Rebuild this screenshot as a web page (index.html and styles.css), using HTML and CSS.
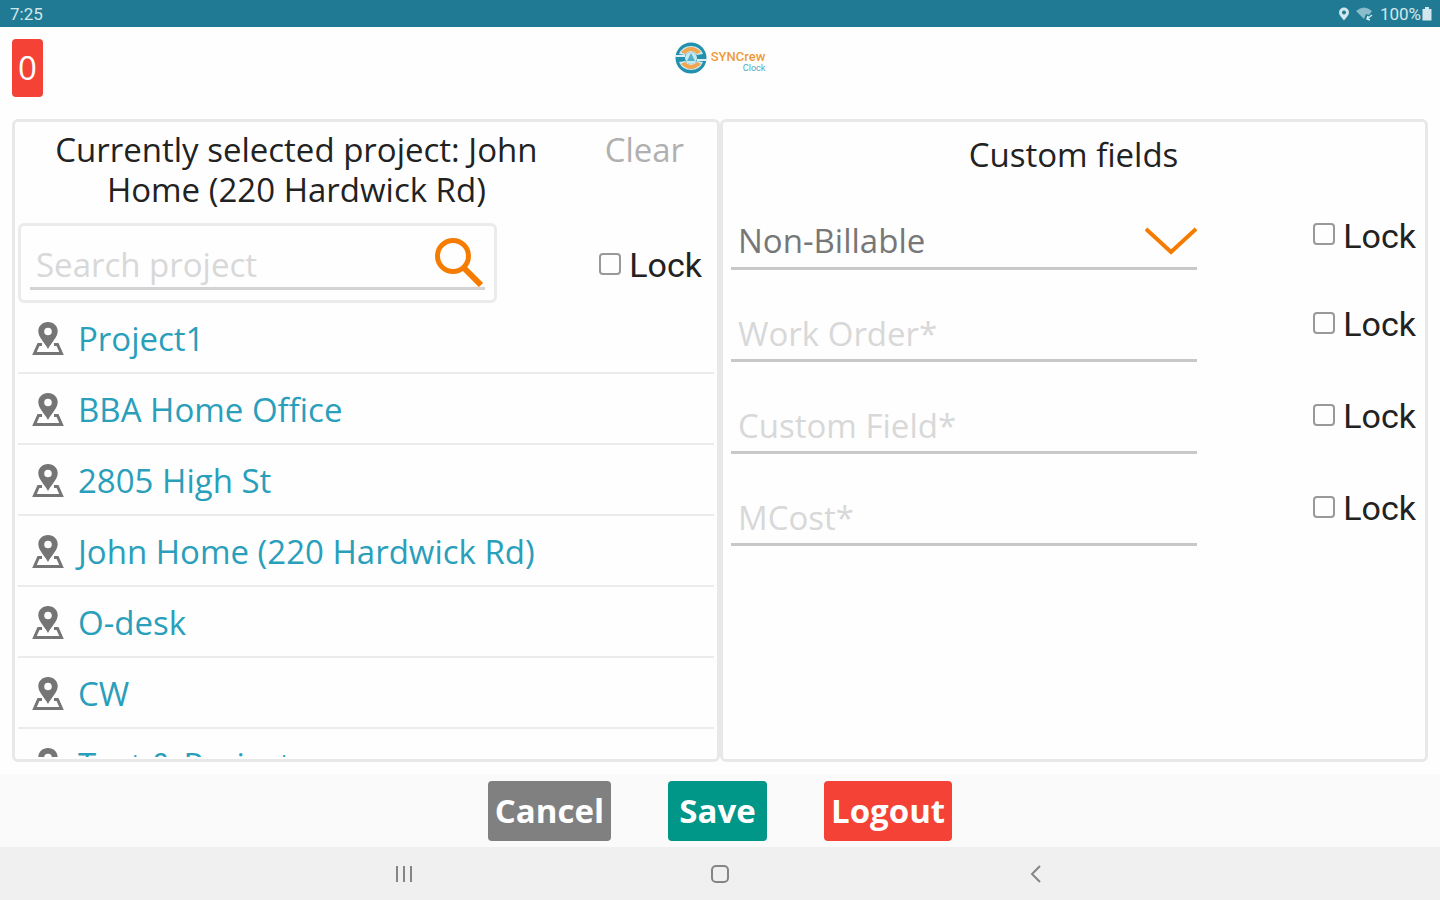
FILE: index.html
```html
<!DOCTYPE html>
<html lang="en">
<head>
  <meta charset="UTF-8">
  <meta name="viewport" content="width=device-width, initial-scale=1">
  <title>SYNCrew Clock</title>
  <link rel="stylesheet" href="styles.css">
</head>

<body>

  <!-- shared icons -->
  <svg class="sprite" aria-hidden="true">
    <symbol id="icon-place" viewBox="0 0 32 36">
      <path fill-rule="evenodd" d="M16 1C10.400 1 6.300 5 6.300 10.200C6.300 16 12 20.500 16 28C20 20.500 25.700 16 25.700 10.200C25.700 5 21.600 1 16 1ZM16 6.700A3.800 3.800 0 1 1 16 14.300A3.800 3.800 0 1 1 16 6.700Z"/>
      <path d="M10 23.500H6.500L2.500 32.500H29.500L25.500 23.500H22" fill="none" stroke="currentColor" stroke-width="3"/>
    </symbol>
  </svg>

  <div class="status-bar">
    <span>7:25</span>
    <div class="status-icons">
      <svg width="12" height="14" viewBox="0 0 12 14"><path fill="currentColor" fill-rule="evenodd" d="M6 0.500A5 5 0 0 0 1 5.500C1 8.500 4 10.500 6 13.500C8 10.500 11 8.500 11 5.500A5 5 0 0 0 6 0.500ZM6 3.500A2 2 0 1 1 6 7.500A2 2 0 1 1 6 3.500Z"/></svg>
      <svg width="18" height="14" viewBox="0 0 18 14"><path fill="currentColor" opacity=".6" d="M0 4Q8 -3 16 4L13 8L10 7L8 12Z"/><path d="M11 12L16 8M12 9L11 12L14 13" fill="none" stroke="currentColor" stroke-width="1.500"/></svg>
      <span>100%</span>
      <svg class="battery" width="10" height="14" viewBox="0 0 10 14"><path fill="currentColor" d="M3 0H7V2H9.500V13.500H.5V2H3Z"/></svg>
    </div>
  </div>

  <header class="app-header">
    <span class="counter">0</span>
    <div class="logo">
      <svg width="32" height="32" viewBox="0 0 32 32">
        <circle cx="16" cy="16" r="15.500" fill="#2390ad"/>
        <path d="M4 12A13 13 0 0 1 28 12L22 13Q16 7 10 13Z" fill="#cfe8ee"/>
        <path d="M4 20A13 13 0 0 0 28 20L22 19Q16 25 10 19Z" fill="#cfe8ee"/>
        <path d="M6 10Q16 0 26 10L22 12Q16 6 10 12Z" fill="#f2a650"/>
        <path d="M6 22Q16 32 26 22L22 20Q16 26 10 20Z" fill="#f2a650"/>
        <path d="M0 14H10M22 18H32" stroke="#d9eff4" stroke-width="2"/>
        <circle cx="16" cy="16" r="6" fill="#c7e9f1"/>
        <path d="M16 11L20 19H12Z" fill="#53b0c8"/>
      </svg>
      <div class="logo-text">
        <span class="logo-name">SYNCrew</span>
        <span class="logo-sub">Clock</span>
      </div>
    </div>
  </header>

  <main class="panels">
    <section class="panel projects">
      <div class="selected">
        <h1>Currently selected project: John Home (220 Hardwick Rd)</h1>
        <button type="button" class="clear">Clear</button>
      </div>

      <div class="search-row">
        <div class="search-box">
          <div class="search-field">
            <input type="text" placeholder="Search project" aria-label="Search project">
            <svg width="52" height="52" viewBox="0 0 52 52"><circle cx="20" cy="21" r="15.500" fill="none" stroke="#f57c00" stroke-width="5"/><path d="M31 33L48 50" stroke="#f57c00" stroke-width="6"/></svg>
          </div>
        </div>
        <label class="lock"><input type="checkbox">Lock</label>
      </div>

      <ul class="project-list">
        <li><a href="#"><svg><use href="#icon-place"/></svg>Project1</a></li>
        <li><a href="#"><svg><use href="#icon-place"/></svg>BBA Home Office</a></li>
        <li><a href="#"><svg><use href="#icon-place"/></svg>2805 High St</a></li>
        <li><a href="#"><svg><use href="#icon-place"/></svg>John Home (220 Hardwick Rd)</a></li>
        <li><a href="#"><svg><use href="#icon-place"/></svg>O-desk</a></li>
        <li><a href="#"><svg><use href="#icon-place"/></svg>CW</a></li>
        <li><a href="#"><svg><use href="#icon-place"/></svg>Test &amp; Project</a></li>
      </ul>
    </section>

    <section class="panel custom">
      <h2>Custom fields</h2>

      <div class="field-row field-row-select">
        <div class="field">
          <select aria-label="Billing type">
            <option>Non-Billable</option>
            <option>Billable</option>
          </select>
          <svg class="chevron" width="52" height="28" viewBox="0 0 52 28"><path d="M1 2L26 25L51 2" fill="none" stroke="#f57c00" stroke-width="4"/></svg>
        </div>
        <label class="lock"><input type="checkbox">Lock</label>
      </div>
      <div class="field-row">
        <div class="field"><input type="text" placeholder="Work Order*" aria-label="Work Order"></div>
        <label class="lock"><input type="checkbox">Lock</label>
      </div>
      <div class="field-row">
        <div class="field"><input type="text" placeholder="Custom Field*" aria-label="Custom Field"></div>
        <label class="lock"><input type="checkbox">Lock</label>
      </div>
      <div class="field-row">
        <div class="field"><input type="text" placeholder="MCost*" aria-label="MCost"></div>
        <label class="lock"><input type="checkbox">Lock</label>
      </div>
    </section>
  </main>

  <footer class="actions">
    <button type="button" class="btn cancel">Cancel</button>
    <button type="button" class="btn save">Save</button>
    <button type="button" class="btn logout">Logout</button>
  </footer>

  <nav class="nav-bar">
    <button type="button" aria-label="Recent apps"><svg width="20" height="20" viewBox="0 0 20 20"><path d="M3 2V18M10 2V18M17 2V18"/></svg></button>
    <button type="button" aria-label="Home"><svg width="20" height="20" viewBox="0 0 20 20"><rect x="2" y="2" width="16" height="16" rx="4"/></svg></button>
    <button type="button" aria-label="Back"><svg width="20" height="20" viewBox="0 0 20 20"><path d="M14 2L6 10L14 18"/></svg></button>
  </nav>

</body>
</html>
```

FILE: styles.css
```css
* {
  box-sizing: border-box;
}

body {
  font-family: "Open Sans", "Noto Sans", sans-serif;
  font-size: 33px;
  line-height: 40px;
  color: #222;
  background: #fefefe;
  margin: 0;
  display: flex;
  flex-direction: column;
  height: 100vh;
}

h1, h2 {
  margin: 0;
  font-size: inherit;
  font-weight: 400;
  text-align: center;
}

button, input, select {
  font: inherit;
  border: none;
  background: none;
  margin: 0;
  padding: 0;
}

.sprite {
  display: none;
}

.status-bar {
  display: flex;
  justify-content: space-between;
  align-items: center;
  height: 27px;
  padding: 0 8px 0 10px;
  background: #217a93;
  color: #d2e7ed;
  font-family: Roboto, sans-serif;
  font-size: 17px;
  line-height: 20px;
}

.status-icons {
  display: flex;
  align-items: center;
  gap: 6px;
}

.battery {
  margin-left: -5px;
}

.app-header {
  display: grid;
  grid-template-columns: 1fr auto 1fr;
  align-items: start;
  height: 92px;
  padding: 12px;
}

.counter {
  justify-self: start;
  width: 31px;
  border-radius: 4px;
  background: #f44336;
  color: #fff;
  line-height: 58px;
  text-align: center;
}

.logo {
  display: flex;
  gap: 4px;
  padding-top: 3px;
}

.logo-text {
  display: flex;
  flex-direction: column;
  align-items: flex-end;
  padding-top: 8px;
  font-family: Roboto, sans-serif;
}

.logo-name {
  font-size: 13px;
  font-weight: 500;
  line-height: 14px;
  color: #f09a38;
}

.logo-sub {
  font-size: 9px;
  line-height: 8px;
  color: #4bacc5;
}

.panels {
  flex: 1;
  min-height: 0;
  display: grid;
  grid-template-columns: 1fr 1fr;
  padding: 0 12px 12px;
}

.panel {
  min-height: 0;
  border: 3px solid #e8e8e8;
  border-radius: 6px;
}

.projects {
  display: flex;
  flex-direction: column;
  padding: 0 3px 2px;
}

.selected {
  display: grid;
  grid-template-columns: 4fr 1fr;
  align-items: start;
  padding-top: 8px;
}

.selected h1 {
  padding: 0 20px;
}

.clear {
  color: #b0b0b0;
}

.search-row {
  display: flex;
  justify-content: space-between;
  align-items: center;
  padding: 13px 12px 0 0;
}

.search-box {
  width: 70%;
  height: 80px;
  padding: 10px 9px;
  border: 3px solid #ebebeb;
  border-radius: 6px;
}

.search-field {
  display: flex;
  align-items: flex-end;
  height: 54px;
  border-bottom: 3px solid #d3d3d3;
}

.search-field input {
  flex: 1;
  min-width: 0;
  height: 46px;
  padding-left: 6px;
}

.search-field svg {
  flex: none;
}

input::placeholder {
  color: #d8d8d8;
  opacity: 1;
}

.lock {
  display: flex;
  align-items: center;
  gap: 8px;
  padding-top: 4px;
  font-family: Roboto, sans-serif;
  font-size: 34px;
}

.lock input {
  appearance: none;
  width: 22px;
  height: 22px;
  margin-bottom: 3px;
  border: 2px solid #999;
  border-radius: 4px;
}

.project-list {
  flex: 1;
  min-height: 0;
  overflow: hidden;
  list-style: none;
  margin: 0;
  padding: 0;
}

.project-list li {
  height: 71px;
  border-bottom: 2px solid #ebebeb;
}

.project-list a {
  display: flex;
  align-items: center;
  gap: 14px;
  height: 100%;
  padding: 2px 0 0 14px;
  color: #2a9fbb;
  text-decoration: none;
}

.project-list svg {
  width: 32px;
  height: 36px;
  color: #757575;
  fill: currentColor;
}

.custom {
  padding: 0 9px 0 8px;
}

.custom h2 {
  padding: 13px 0 22px;
}

.field-row {
  display: flex;
  justify-content: space-between;
  align-items: center;
  height: 92px;
}

.field-row .lock {
  padding-top: 16px;
}

.field {
  position: relative;
  width: 68%;
  height: 100%;
  padding-top: 38px;
  border-bottom: 3px solid #c8c8c8;
}

.field input, .field select {
  display: block;
  width: 100%;
  height: 50px;
  padding-left: 7px;
}

.field select {
  appearance: none;
  color: #777;
}

.chevron {
  position: absolute;
  right: 0;
  bottom: 12px;
  pointer-events: none;
}

.field-row-select {
  height: 73px;
}

.field-row-select .field {
  padding-top: 19px;
}

.field-row-select .lock {
  padding-top: 4px;
}

.actions {
  display: flex;
  justify-content: center;
  align-items: center;
  gap: 57px;
  height: 73px;
  background: #fafafa;
}

.btn {
  min-width: 99px;
  height: 60px;
  padding: 0 7px;
  border-radius: 4px;
  color: #fff;
  font-weight: 700;
}

.cancel {
  background: #808080;
}

.save {
  background: #009688;
}

.logout {
  background: #f44336;
}

.nav-bar {
  display: flex;
  justify-content: center;
  align-items: center;
  gap: 296px;
  height: 53px;
  background: #f0f0f0;
}

.nav-bar button {
  display: flex;
}

.nav-bar svg {
  fill: none;
  stroke: #858585;
  stroke-width: 2;
}
```
